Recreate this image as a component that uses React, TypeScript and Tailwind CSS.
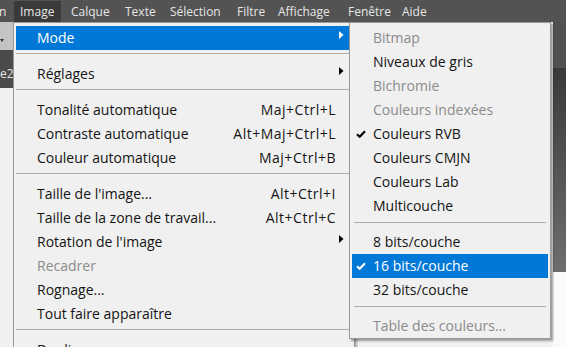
import React from "react";

type Item =
  | { sep: true }
  | { label: string; shortcut?: string; sub?: boolean; off?: boolean; active?: boolean; checked?: boolean };

const BAR = [
  { label: "Image", w: "w-[47px] mr-[4px]", on: true },
  { label: "Calque", w: "w-[54px]" },
  { label: "Texte", w: "w-[45px]" },
  { label: "Sélection", w: "w-[67px]" },
  { label: "Filtre", w: "w-[41px]" },
  { label: "Affichage", w: "w-[70px]" },
  { label: "Fenêtre", w: "w-[54px]" },
  { label: "Aide", w: "w-[40px]" },
];

const MAIN: Item[] = [
  { label: "Mode", sub: true, active: true },
  { sep: true },
  { label: "Réglages", sub: true },
  { sep: true },
  { label: "Tonalité automatique", shortcut: "Maj+Ctrl+L" },
  { label: "Contraste automatique", shortcut: "Alt+Maj+Ctrl+L" },
  { label: "Couleur automatique", shortcut: "Maj+Ctrl+B" },
  { sep: true },
  { label: "Taille de l'image...", shortcut: "Alt+Ctrl+I" },
  { label: "Taille de la zone de travail...", shortcut: "Alt+Ctrl+C" },
  { label: "Rotation de l'image", sub: true },
  { label: "Recadrer", off: true },
  { label: "Rognage..." },
  { label: "Tout faire apparaître" },
  { sep: true },
  { label: "Dupliquer..." },
];

const MODE: Item[] = [
  { label: "Bitmap", off: true },
  { label: "Niveaux de gris" },
  { label: "Bichromie", off: true },
  { label: "Couleurs indexées", off: true },
  { label: "Couleurs RVB", checked: true },
  { label: "Couleurs CMJN" },
  { label: "Couleurs Lab" },
  { label: "Multicouche" },
  { sep: true },
  { label: "8 bits/couche" },
  { label: "16 bits/couche", checked: true, active: true },
  { label: "32 bits/couche" },
  { sep: true },
  { label: "Table des couleurs...", off: true },
];

function Arrow({ white }: { white?: boolean }) {
  return (
    <svg width="5" height="8" viewBox="0 0 5 8" className="mb-[5px]">
      <path d="M0 0L4.5 4L0 8Z" fill={white ? "#ffffff" : "#000000"} />
    </svg>
  );
}

function Check({ white }: { white?: boolean }) {
  return (
    <svg width="10" height="8" viewBox="0 0 10 8" className="mt-[1px]">
      <path
        d="M1 4.2L3.7 6.8L9 1.2"
        fill="none"
        stroke={white ? "#ffffff" : "#000000"}
        strokeWidth="2.1"
      />
    </svg>
  );
}

function textColor(it: { off?: boolean; active?: boolean }) {
  if (it.active) return "text-white";
  if (it.off) return "text-[#8b8b8b]";
  return "text-[#141414]";
}

function MainMenu() {
  return (
    <div className="absolute left-[13px] top-[22px] w-[342px] border border-[#999999] bg-[#f0f0f0] px-[2px] pt-[3px] shadow-[2px_2px_2px_rgba(0,0,0,0.3)]">
      {MAIN.map((it, i) =>
        "sep" in it ? (
          <div key={i} className="h-[12px] pt-[3px]">
            <div className="h-px bg-[#acacac]" />
          </div>
        ) : (
          <div
            key={i}
            className={`flex h-[24px] items-center pb-[2px] pl-[21px] ${it.active ? "bg-[#0078d7]" : ""} ${textColor(it)}`}
          >
            <span className="flex-1">{it.label}</span>
            {it.shortcut && <span className="tracking-[0.5px]">{it.shortcut}</span>}
            <span className="flex w-[16px] pl-[3px]">{it.sub && <Arrow white={it.active} />}</span>
          </div>
        )
      )}
    </div>
  );
}

function ModeMenu() {
  return (
    <div className="absolute left-[349px] top-[22px] w-[202px] border border-[#999999] bg-[#f0f0f0] px-[2px] pt-[3px] shadow-[2px_2px_2px_rgba(0,0,0,0.35)]">
      {MODE.map((it, i) =>
        "sep" in it ? (
          <div key={i} className="h-[12px] px-[2px] pt-[4px]">
            <div className="h-px bg-[#acacac]" />
          </div>
        ) : (
          <div
            key={i}
            className={`flex h-[24px] items-center pb-[2px] ${it.active ? "bg-[#0078d7]" : ""} ${textColor(it)}`}
          >
            <span className="flex w-[21px] pl-[4px]">{it.checked && <Check white={it.active} />}</span>
            <span>{it.label}</span>
          </div>
        )
      )}
    </div>
  );
}

export default function App() {
  return (
    <div className="relative h-[347px] w-[566px] overflow-hidden bg-white font-['Open_Sans',sans-serif] text-[14px]">
      {/* menu bar */}
      <div className="flex h-[22px] items-center bg-[#535353] pt-[1px] text-[12px] text-[#e6e6e6]">
        <div className="w-[15px] -ml-[1px]">n</div>
        {BAR.map((b) => (
          <div
            key={b.label}
            className={`flex h-[22px] shrink-0 items-center pl-[6px] ${b.w} ${b.on ? "bg-[#3a3a3a]" : ""}`}
          >
            {b.label}
          </div>
        ))}
      </div>

      {/* workspace behind the menus */}
      <div className="flex h-[325px]">
        <div className="flex w-[13px] flex-col">
          <div className="h-[28px] bg-[#c3c3c3] pt-[17px]">
            <svg width="4" height="4" viewBox="0 0 4 4" className="block">
              <path d="M0 0H4L2 3Z" fill="#333" />
            </svg>
          </div>
          <div className="h-[38px] overflow-hidden whitespace-nowrap bg-[#4b4b4b] pt-[17px] text-[12px] leading-[14px] text-[#e4e4e4]">
            e2-
          </div>
          <div className="flex-1 bg-[#f0f0f0]" />
        </div>
        <div className="flex-1 bg-[#f0f0f0]" />
        <div className="flex w-[13px] flex-col">
          <div className="h-[46px] bg-[#505050]" />
          <div className="h-[204px] bg-[linear-gradient(#3a3a3a,#6e6e6e)]" />
          <div className="flex-1 bg-[#fafafa]" />
        </div>
      </div>

      <MainMenu />
      <ModeMenu />
    </div>
  );
}
